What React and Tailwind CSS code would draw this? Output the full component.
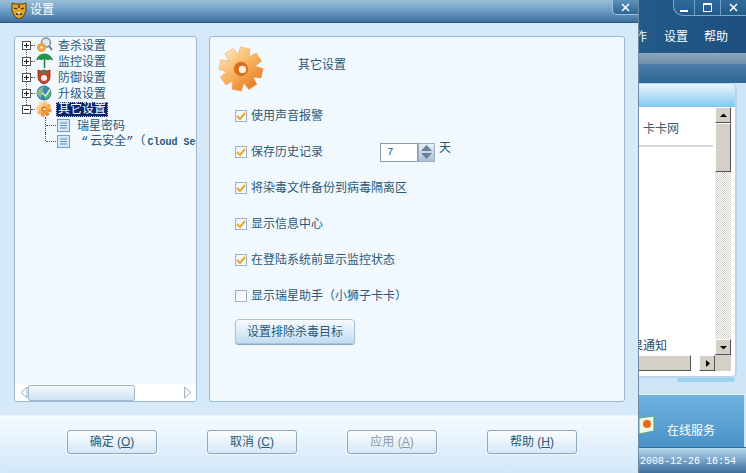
import React from "react";

const FONT = "font-['Liberation_Sans','Noto_Sans_CJK_SC',sans-serif]";
const MONO = "font-['Liberation_Mono',monospace]";

// 8 tooth cog, tilted a little like the one in the dialog
const gearPath = () => {
  const points = [];
  for (let i = 0; i < 8; i++) {
    const a = (i * Math.PI) / 4 + 0.2;
    [
      [-0.4, 15],
      [-0.22, 23],
      [0.22, 23],
      [0.4, 15],
    ].forEach(([off, r]) => {
      points.push(`${(24 + r * Math.cos(a + off)).toFixed(1)} ${(24 + r * Math.sin(a + off)).toFixed(1)}`);
    });
  }
  return `M${points.join("L")}z`;
};

const GearIcon = ({ size, id }) => (
  <svg width={size} height={size} viewBox="0 0 48 48" className="shrink-0">
    <defs>
      <linearGradient id={id} x1="0.1" y1="0" x2="0.9" y2="1">
        <stop offset="0" stopColor="#fdeccd" />
        <stop offset="0.45" stopColor="#f9b763" />
        <stop offset="1" stopColor="#e2701a" />
      </linearGradient>
    </defs>
    <path fill={`url(#${id})`} stroke="#f1a04d" strokeWidth="0.6" d={gearPath()} />
    <circle cx="24" cy="24" r="7.500" fill="#d8701d" />
    <circle cx="25.500" cy="24.500" r="3.800" fill="#fbf1e2" />
  </svg>
);

const Tiger = () => (
  <svg width="16" height="17" viewBox="0 0 16 17" className="shrink-0">
    <path d="M1 1l3 1h8l3-1 0 8-3 6-4 2-4-2-3-6z" fill="#e0a52c" stroke="#5d3d10" strokeWidth="1" />
    <path d="M3 6l3 1M13 6l-3 1M8 3v3M5 12h6" stroke="#3a2508" strokeWidth="1.3" fill="none" />
    <path d="M6 10h4l-2 3z" fill="#f8e8c0" />
  </svg>
);

const SearchIcon = () => (
  <svg width="17" height="16" viewBox="0 0 17 16" className="shrink-0">
    <circle cx="10" cy="5.500" r="4.500" fill="#dfe9f2" stroke="#7d8ea0" strokeWidth="1.4" />
    <path d="M13 9l3 4" stroke="#6d7b8a" strokeWidth="2" />
    <circle cx="5.500" cy="10.500" r="4.500" fill="#f2a23a" />
    <circle cx="5.500" cy="10.500" r="1.600" fill="#fde9c8" />
  </svg>
);

const UmbrellaIcon = () => (
  <svg width="17" height="16" viewBox="0 0 17 16" className="shrink-0">
    <path d="M0.500 7C2 2 6 1 8.500 1s6.500 1 8 6C14 5.500 13 6 12 7c-1-1.500-6-1.500-7 0C4 6 3 5.500 0.500 7z" fill="#1f9a4c" stroke="#0f6a2e" strokeWidth="0.6" />
    <path d="M8.500 6v9" stroke="#2a7a46" strokeWidth="1.500" />
  </svg>
);

const ShieldIcon = () => (
  <svg width="16" height="16" viewBox="0 0 16 16" className="shrink-0">
    <path d="M2 1l3 1 3-1 3 1 3-1v7c0 4-3 6-6 7-3-1-6-3-6-7z" fill="#c9412f" stroke="#8a2a1d" strokeWidth="0.8" />
    <circle cx="8" cy="9" r="3" fill="#fbf3ea" />
    <path d="M6 1.500h4v3H6z" fill="#2e8f58" />
  </svg>
);

const GlobeIcon = () => (
  <svg width="16" height="16" viewBox="0 0 16 16" className="shrink-0">
    <circle cx="8" cy="8" r="7.500" fill="#3a87b8" />
    <path d="M1 7c2-4 5-5 7-5-1 2-2 3-1 5s-2 3-2 6C3 12 1 10 1 7z" fill="#8fb98f" />
    <path d="M7 8l3 3 5-7-1 7-4 3z" fill="#5cb84a" />
    <path d="M6.500 8l3 3 4.500-6.500" stroke="#e6f5df" strokeWidth="1.400" fill="none" />
  </svg>
);

const DocIcon = () => (
  <svg width="13" height="13" viewBox="0 0 13 13" className="shrink-0">
    <rect x="0.500" y="0.500" width="12" height="12" fill="#d6e8f7" stroke="#6f9dc4" />
    <path d="M3 4h7M3 6.500h7M3 9h7" stroke="#5f8fb8" strokeWidth="1" />
  </svg>
);

const Expander = ({ open }) => (
  <span className="flex size-[9px] items-center justify-center border border-[#505050] bg-white">
    <svg width="7" height="7" viewBox="0 0 7 7">
      <path d={open ? "M1 3.500h5" : "M1 3.500h5M3.500 1v5"} stroke="#222" strokeWidth="1" />
    </svg>
  </span>
);

const TreeRow = ({ icon, label, open, selected, last }) => (
  <div className="relative flex h-4 items-center pl-[7px]">
    <Expander open={open} />
    <span className="h-0 w-[4px] border-t border-dotted border-[#555]" />
    <span className="ml-px flex w-[20px]">{icon}</span>
    {!last && (
      <span className="absolute left-[11px] top-[12px] h-[8px] border-l border-dotted border-[#555]" />
    )}
    <span
      className={
        selected
          ? "border border-dotted border-[#c8c8c8] bg-[#0a246a] px-px leading-[13px] text-white"
          : "px-[2px] pt-px text-[#2b5878]"
      }
    >
      {label}
    </span>
  </div>
);

const ChildRow = ({ children, pad, end }) => (
  <div className="relative flex h-4 items-center whitespace-nowrap pl-[31px]">
    <span className={`absolute left-[30px] top-0 border-l border-dotted border-[#555] ${end ? "h-[8px]" : "h-4"}`} />
    <span className="mr-px h-0 w-[10px] border-t border-dotted border-[#555]" />
    <DocIcon />
    <span className={`pt-px text-[#2b5878] ${pad}`}>{children}</span>
  </div>
);

const CheckRow = ({ label, checked, children }) => (
  <div className="flex h-9 items-center">
    <span className="flex size-[12px] shrink-0 items-center justify-center border border-[#9fb2c2] bg-gradient-to-br from-[#eef1f3] to-white">
      {checked && (
        <svg width="10" height="10" viewBox="0 0 10 10">
          <path d="M1 5l3 3 5-6" stroke="#e8a92f" strokeWidth="2" fill="none" />
        </svg>
      )}
    </span>
    <span className="ml-[4px] text-[#2b5878]">{label}</span>
    {children}
  </div>
);

const FooterButton = ({ label, hotkey, disabled }) => (
  <button
    className={`h-[24px] w-[90px] rounded-[3px] border border-[#8fa9bd] bg-gradient-to-b from-[#fafdff] to-[#d6e8f5] text-[12px] shadow-[0_0_0_1px_#eef6fc] ${
      disabled ? "text-[#8c9aa6]" : "text-[#2b5878]"
    }`}
  >
    {label} (<u>{hotkey}</u>)
  </button>
);

const TitleGlyph = ({ d }) => (
  <svg width="9" height="9" viewBox="0 0 9 9">
    <path d={d} stroke="#fff" strokeWidth="1.500" fill="none" />
  </svg>
);

const ClassicArrow = ({ d, className }) => (
  <span
    className={`flex items-center justify-center border border-b-[#555] border-l-white border-r-[#555] border-t-white bg-[#d4d0c8] ${className}`}
  >
    <svg width="7" height="7" viewBox="0 0 7 7">
      <path d={d} fill="#000" />
    </svg>
  </span>
);

const SettingsDialog = () => (
  <div className="flex h-full w-[639px] shrink-0 flex-col border-r border-[#6d8ba3] bg-[#d5e9f9]">
    <div className="flex h-[23px] shrink-0 border-b border-[#2b5c87] bg-gradient-to-b from-[#9bbfd8] via-[#6c9cc2] to-[#3c719f]">
      <div className="ml-[11px] mt-[2px]">
        <Tiger />
      </div>
      <span className="ml-[3px] mt-[3px] text-[12px] leading-[14px] text-white">设置</span>
      <div className="ml-auto flex h-[15px] w-[26px] items-center justify-center rounded-bl-[5px] border-b border-l border-[#9cc3de] bg-gradient-to-b from-[#5d93ba] to-[#2b6596]">
        <TitleGlyph d="M1 1l7 7M8 1l-7 7" />
      </div>
    </div>

    <div className="flex h-[379px] shrink-0 gap-[12px] pl-[14px] pt-[13px]">
      <div className="flex h-[366px] w-[183px] flex-col overflow-hidden rounded-[3px] border border-[#9db8cf] bg-[#f2f9fe]">
        <div className="flex-1 overflow-hidden text-[12px] leading-[16px]">
          <TreeRow icon={<SearchIcon />} label="查杀设置" />
          <TreeRow icon={<UmbrellaIcon />} label="监控设置" />
          <TreeRow icon={<ShieldIcon />} label="防御设置" />
          <TreeRow icon={<GlobeIcon />} label="升级设置" />
          <TreeRow icon={<GearIcon size={16} id="gear-small" />} label="其它设置" open selected last />
          <ChildRow pad="ml-[7px]">瑞星密码</ChildRow>
          <ChildRow pad="ml-[11px]" end>
            <span className={MONO}>“</span>
            <span className="ml-[2px]">云安全</span>
            <span className={MONO}>”</span>
            <span className="ml-[6px] font-['Noto_Sans_CJK_SC',sans-serif]">（</span>
            <span className={`${MONO} ml-[2px] text-[10px] font-bold`}>Cloud Se</span>
          </ChildRow>
        </div>
        <div className="flex h-[17px] shrink-0 items-center bg-white">
          <svg width="8" height="13" viewBox="0 0 8 13" className="ml-[5px]">
            <path d="M7 1L1 6.500 7 12z" fill="#f6fafd" stroke="#9db0c0" />
          </svg>
          <span className="h-[16px] w-[107px] rounded-[2px] border border-[#a2bacd] bg-gradient-to-b from-[#f3f9fd] to-[#cfe2f1]" />
          <svg width="9" height="13" viewBox="0 0 9 13" className="ml-auto mr-[4px]">
            <path d="M1.500 1L8 6.500 1.500 12z" fill="#f6fafd" stroke="#9db0c0" />
          </svg>
        </div>
      </div>

      <div className="flex h-[366px] w-[416px] flex-col rounded-[3px] border border-[#9db8cf] bg-[#f2f9fe] text-[12px] leading-[16px]">
        <div className="flex h-[61px] shrink-0 pl-[8px] pt-[9px]">
          <GearIcon size={46} id="gear-large" />
          <span className="ml-[34px] mt-[11px] text-[#2b5878]">其它设置</span>
        </div>
        <div className="pl-[25px]">
          <CheckRow label="使用声音报警" checked />
          <CheckRow label="保存历史记录" checked>
            <div className="ml-[57px] flex h-[19px] items-start">
              <span className={`h-[19px] w-[38px] border border-[#8a9cb0] bg-white pl-[6px] ${MONO} text-[11px] leading-[16px] text-[#2b5878]`}>
                7
              </span>
              <span className="flex h-[19px] w-[17px] flex-col items-center justify-center gap-[2px] border border-[#9db0c0] bg-gradient-to-b from-[#e6eff6] to-[#a9c0d4]">
                <svg width="11" height="6" viewBox="0 0 11 6">
                  <path d="M5.500 0L11 6H0z" fill="#6d8096" />
                </svg>
                <svg width="11" height="6" viewBox="0 0 11 6">
                  <path d="M5.500 6L11 0H0z" fill="#6d8096" />
                </svg>
              </span>
              <span className="ml-[4px] mt-[-3px] text-[#2b5878]">天</span>
            </div>
          </CheckRow>
          <CheckRow label="将染毒文件备份到病毒隔离区" checked />
          <CheckRow label="显示信息中心" checked />
          <CheckRow label="在登陆系统前显示监控状态" checked />
          <CheckRow label="显示瑞星助手（小狮子卡卡）" />
          <button className="mt-[5px] h-[25px] w-[120px] rounded-[4px] border border-[#a9c3d8] bg-gradient-to-b from-[#f6fbfe] to-[#c2dcf1] text-[12px] text-[#2b5878] shadow-[0_1px_1px_#7f9fba]">
            设置排除杀毒目标
          </button>
        </div>
      </div>
    </div>

    <div className="mt-[13px] flex flex-1 items-start gap-[50px] rounded-bl-[6px] border-t border-[#e8f3fb] bg-gradient-to-b from-[#f5fbff] to-[#d3e7f8] pl-[67px] pt-[14px]">
      <FooterButton label="确定" hotkey="O" />
      <FooterButton label="取消" hotkey="C" />
      <FooterButton label="应用" hotkey="A" disabled />
      <FooterButton label="帮助" hotkey="H" />
    </div>
  </div>
);

const BackWindow = () => (
  <div className="flex h-full min-w-0 flex-1 flex-col overflow-hidden bg-[#cfe6f8] text-[12px] leading-[16px]">
    <div className="h-[53px] shrink-0 bg-gradient-to-r from-[#235a8a] to-[#1d4f7e]">
      <div className="flex h-[16px] justify-end">
        <div className="flex w-[73px] items-center rounded-bl-[10px] border-b border-l border-[#7ea8c7] bg-gradient-to-b from-[#2e6c9d] to-[#245a8b]">
          <span className="flex h-full w-[20px] items-end justify-center pb-[3px]">
            <span className="h-[2px] w-[8px] bg-white" />
          </span>
          <span className="flex h-full w-[27px] items-center justify-center border-l border-[#6f9cbf]">
            <span className="size-[9px] border border-t-2 border-white" />
          </span>
          <span className="flex h-full w-[26px] items-center justify-center border-l border-[#6f9cbf]">
            <TitleGlyph d="M1 1l7 7M8 1l-7 7" />
          </span>
        </div>
      </div>
      <div className="mt-[13px] flex justify-end gap-4 whitespace-nowrap pr-[18px] text-white">
        <span className="w-[9px] overflow-hidden text-right [direction:rtl]">作</span>
        <span className="ml-[1px]">设置</span>
        <span>帮助</span>
      </div>
    </div>
    <div className="h-[11px] shrink-0 bg-gradient-to-b from-[#8ea8bc] to-[#6f8fa9]" />
    <div className="h-[19px] shrink-0 bg-gradient-to-b from-[#4b7da6] to-[#2f6696]" />
    <div className="h-[295px] w-[98px] shrink-0 overflow-hidden rounded-br-[6px] rounded-tr-[6px] border-b-2 border-r-2 border-t border-[#b9d6ec] bg-white">
      <div className="h-[23px] bg-gradient-to-b from-[#e9f5fd] to-[#7ec8f0]" />
      <div className="flex h-[248px]">
        <div className="flex w-[76px] shrink-0 flex-col">
          <span className="ml-[4px] mt-[14px] text-[#44596b]">卡卡网</span>
          <span className="mt-[8px] h-[2px] w-[74px] bg-[#d6d8da]" />
          <span className="mt-[191px] whitespace-nowrap text-[#2b4a64]">
            <span className="inline-block w-[4px] overflow-hidden text-right align-bottom [direction:rtl]">果</span>
            通知
          </span>
        </div>
        <div className="flex w-[16px] shrink-0 flex-col">
          <ClassicArrow className="h-[16px] shrink-0" d="M3.500 1.500L7 5H0z" />
          <span className="h-[49px] shrink-0 border border-b-[#555] border-l-white border-r-[#555] border-t-white bg-[#d4d0c8]" />
          <span className="flex-1 bg-[repeating-conic-gradient(#d4d0c8_0_25%,#fff_0_50%)] bg-[length:2px_2px]" />
          <ClassicArrow className="h-[16px] shrink-0" d="M3.500 5.500L7 2H0z" />
        </div>
      </div>
      <div className="flex h-[16px]">
        <span className="h-full w-[52px] shrink-0 border-b border-r border-t border-b-[#555] border-r-[#555] border-t-white bg-[#d4d0c8]" />
        <span className="w-[8px] shrink-0 bg-white" />
        <ClassicArrow className="h-full w-[16px] shrink-0" d="M2 0l4 3.500L2 7z" />
        <span className="w-[16px] shrink-0 bg-[#d4d0c8]" />
      </div>
    </div>
    <div className="ml-[38px] h-[4px] w-[58px] shrink-0 rounded-b-[3px] bg-[#9fd2f2]" />
    <div className="mt-[12px] h-[1px] shrink-0 bg-[#e6f3fb]" />
    <div className="flex h-[52px] w-[105px] shrink-0 items-start bg-gradient-to-b from-[#6fb2e0] to-[#4a93c8] pt-[20px]">
      <svg width="16" height="20" viewBox="0 0 16 20">
        <path d="M0 3l15-2v15L0 19z" fill="#eaf6e8" stroke="#59a77a" />
        <circle cx="8" cy="9" r="4" fill="#e86a1c" />
      </svg>
      <span className="ml-[12px] mt-[8px] whitespace-nowrap text-white">在线服务</span>
    </div>
    <div className={`flex flex-1 items-end whitespace-nowrap border-t border-[#2a6ea6] bg-gradient-to-b from-[#b6d8f0] to-[#3d6f9c] pb-[5px] pl-px ${MONO} text-[10px] leading-[12px] text-white`}>
      2008-12-26 16:54
    </div>
  </div>
);

export default function App() {
  return (
    <div className={`flex h-[473px] w-[746px] overflow-hidden ${FONT}`}>
      <SettingsDialog />
      <BackWindow />
    </div>
  );
}
